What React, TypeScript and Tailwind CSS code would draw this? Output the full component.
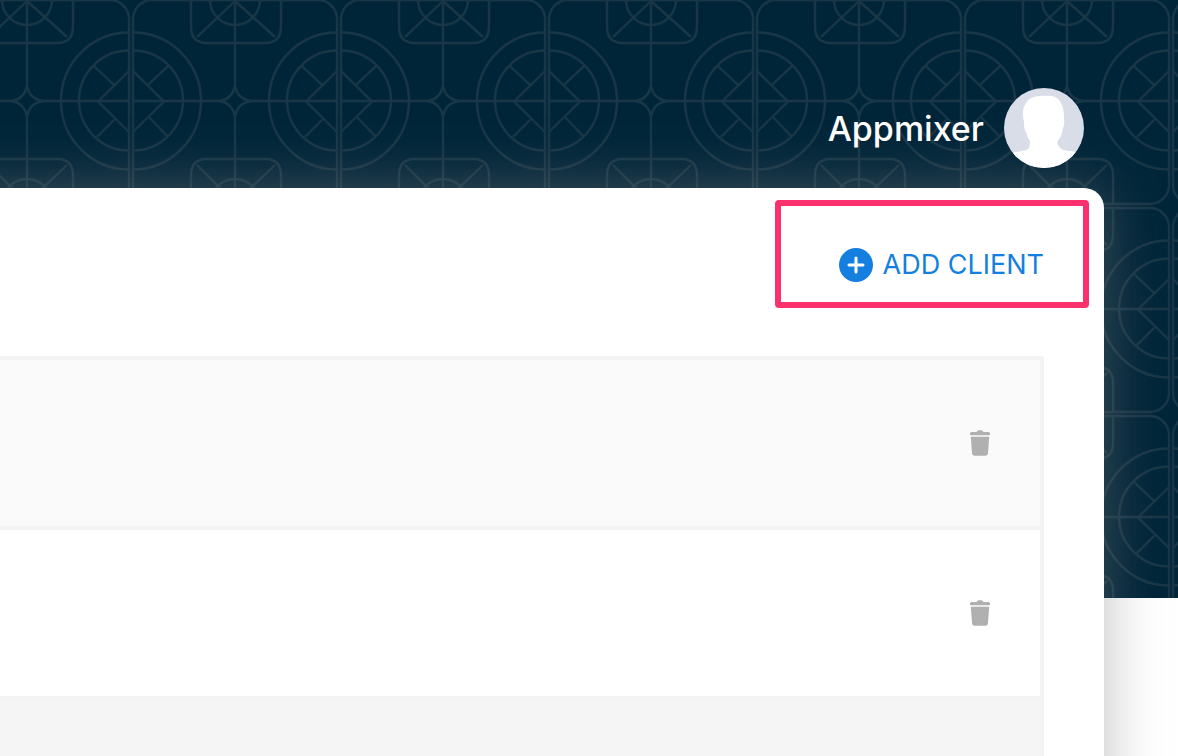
const clients = [
  { id: 1, rowClass: "bg-[#fafafa]" },
  { id: 2, rowClass: "bg-white" },
];

function PatternBackground() {
  return (
    <svg className="absolute inset-x-0 top-0 w-full h-[598px] bg-[#002539]" aria-hidden="true">
      <defs>
        <pattern id="tiles" x="131" y="-2" width="208" height="208" patternUnits="userSpaceOnUse">
          <g fill="none" stroke="#193647" strokeWidth="2.4">
            <rect x="2" y="2" width="204" height="204" rx="19" />
            {/* big circles, one half on each side of the tile */}
            <path d="M2 34.5a68 68.500 0 0 1 0 137M206 34.5a68 68.500 0 0 0 0 137" />
            <path d="M2 52.5a50 50 0 0 1 0 100M206 52.5a50 50 0 0 0 0 100" />
            <path d="M2 73l31 30.5L2 134M206 73l-31 30.5L206 134" />
            <path d="M37 68L17 87M36 138L18 119M171 68l20 19M174 139l18-18" />
            {/* star in the middle */}
            <path d="M2 103h86q14-2 16-16V2M104 206v-87q-2-14-16-16M104 87q2 14 16 16h86M104 119q2-14 16-16" />
            <path d="M60 2v27q0 16 16 16h58q16 0 16-16V2" />
            <path d="M60 206v-29q0-16 16-16h58q16 0 16 16v29" />
            <path d="M79 2a25 25 0 0 0 50 0M79 206a25 25 0 0 1 50 0" />
            <path d="M104 3L66 39M104 3l40 36M104 205L66 167M104 205l40-38" />
          </g>
        </pattern>
      </defs>
      <rect width="100%" height="100%" fill="url(#tiles)" />
    </svg>
  );
}

function Avatar() {
  return (
    <svg className="w-20 h-20 rounded-full bg-[#d9dde8]" viewBox="0 0 80 80" role="img" aria-label="User avatar">
      <path
        fill="#fff"
        d="M30 9c3-1 17-2 21 0 6 3 9 10 9 20 0 3 1 7-1 11-1 5-2 9-4 11-2 2-2 4-1 6 2 4 5 5 9 6 4 0 6 0 9 1v16H8V65c3-1 6-1 10-2 6-1 8-2 8-10-2-3-3-5-4-9-2-3-2-6-2-10-2-8-1-14 1-17 2-5 5-7 9-8z"
      />
    </svg>
  );
}

function TrashIcon() {
  return (
    <svg className="w-5 h-[26px]" viewBox="0 0 20 26" aria-hidden="true">
      <path fill="#b0b0b0" d="M0 5V3.500C0 2.500 1 2 2 2h4.500C7.500.8 8 .2 9 .2h2c1 0 1.500.6 2.500 1.800H18c1 0 2 .5 2 1.500V5z" />
      <path fill="#e8e8e8" d="M1 5h18v2H1z" />
      <path fill="#b0b0b0" d="M.8 7h18.400l-1.200 16c-.2 2-1 2.700-2.700 2.700H4.700C3 25.700 2.200 25 2 23z" />
    </svg>
  );
}

function Header() {
  return (
    <header className="relative z-10 flex items-end justify-end gap-5 h-[188px] pb-5 pr-[94px]">
      <span className="h-20 flex items-center text-white text-[34px] font-medium">Appmixer</span>
      <Avatar />
    </header>
  );
}

function ClientTable() {
  return (
    <div className="flex-1 flex flex-col mr-[60px] rounded-tr border-t-4 border-r-4 border-[#f3f3f3] bg-[#f5f5f5]">
      <table className="w-full border-separate border-spacing-0" aria-label="Clients">
        <tbody>
          {clients.map((client) => (
            <tr key={client.id} className={client.rowClass}>
              <td className="h-[170px] p-0 pr-[50px] border-b-4 border-[#f3f3f3]">
                <button type="button" aria-label="Delete client" className="block ml-auto cursor-pointer">
                  <TrashIcon />
                </button>
              </td>
            </tr>
          ))}
        </tbody>
      </table>
    </div>
  );
}

export default function App() {
  return (
    <div className="relative min-h-screen flex flex-col overflow-hidden bg-white font-['Inter','Liberation_Sans',sans-serif]">
      <PatternBackground />
      <div className="relative flex-1 flex flex-col">
        <Header />
        <main className="flex-1 flex flex-col mr-[74px] -ml-20 pl-20 -mb-20 pb-20 rounded-tr-[20px] bg-white shadow-[0_0_60px_rgba(128,128,128,0.5)]">
          <div className="relative h-[168px] flex items-start justify-end pt-[60px] pr-[60px]">
            <button type="button" className="flex items-center gap-2.5 text-[#157fdf] text-[27px] leading-[34px] cursor-pointer">
              <svg className="w-[34px] h-[34px]" viewBox="0 0 34 34" aria-hidden="true">
                <circle cx="17" cy="17" r="17" fill="#157fdf" />
                <path d="M17 10v14M10 17h14" stroke="#fff" strokeWidth="3" strokeLinecap="round" />
              </svg>
              ADD CLIENT
            </button>
            <div className="absolute right-[15px] top-3 w-[314px] h-[108px] rounded border-[6px] border-[#fb316d] pointer-events-none" />
          </div>
          <ClientTable />
        </main>
      </div>
    </div>
  );
}
